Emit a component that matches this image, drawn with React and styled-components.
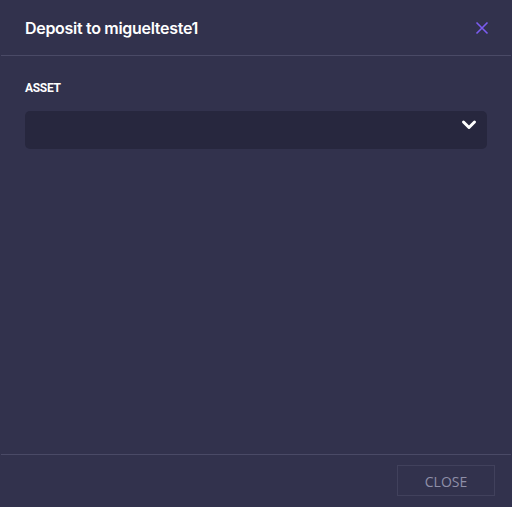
import styled, { createGlobalStyle } from "styled-components";

const GlobalStyle = createGlobalStyle`
  html, body {
    margin: 0;
    padding: 0;
    background: #32324d;
  }
  * {
    box-sizing: border-box;
  }
`

const Modal = styled.div`
  width: 512px;
  height: 507px;
  background: #32324d;
  display: flex;
  flex-direction: column;
  font-family: Inter, "Noto Sans", sans-serif;
  color: #ffffff;
`

const Header = styled.div`
  height: 56px;
  margin: 0 1px;
  padding: 0 22px 0 24px;
  display: flex;
  align-items: center;
  justify-content: space-between;
  border-bottom: 1px solid #4a4a66;
`

const Title = styled.h2`
  margin: 0;
  font-size: 16px;
  font-weight: 600;
  letter-spacing: -0.3px;
`

const CloseIcon = styled.button`
  background: none;
  border: none;
  padding: 0;
  width: 14px;
  height: 14px;
  display: flex;
  cursor: pointer;
`

const Body = styled.div`
  flex: 1;
  padding: 25px 25px 0 25px;
`

const Label = styled.div`
  font-family: Roboto, "Liberation Sans", sans-serif;
  font-size: 12px;
  font-weight: 700;
  letter-spacing: -0.3px;
  margin-bottom: 16px;
`

const Select = styled.div`
  height: 38px;
  width: 462px;
  border-radius: 5px;
  background: #27273e;
  display: flex;
  align-items: flex-start;
  justify-content: flex-end;
  padding: 8px 10px 0 0;
`

const Footer = styled.div`
  height: 53px;
  margin: 0 1px;
  border-top: 1px solid #4a4a66;
  display: flex;
  align-items: flex-start;
  justify-content: flex-end;
  padding: 10px 16px 0 0;
`

const Button = styled.button`
  width: 98px;
  height: 31px;
  background: transparent;
  border: 1px solid #41415c;
  color: #8f8fa8;
  font-family: "Open Sans", sans-serif;
  font-size: 14px;
  text-transform: uppercase;
  cursor: pointer;
  padding-top: 2px;
`

export default function App() {
  return (
    <Modal>
      <GlobalStyle />
      <Header>
        <Title>Deposit to miguelteste1</Title>
        <CloseIcon aria-label="close">
          <svg width="14" height="14" viewBox="0 0 14 14">
            <path d="M1.5 1.5 L12.5 12.5 M12.5 1.5 L1.5 12.5" stroke="#7b5cf0" strokeWidth="1.6" fill="none" />
          </svg>
        </CloseIcon>
      </Header>
      <Body>
        <Label>ASSET</Label>
        <Select>
          <svg width="16" height="11" viewBox="0 0 16 11">
            <path d="M2.5 3 L8 8.5 L13.5 3" stroke="#ffffff" strokeWidth="3" fill="none" strokeLinecap="round" strokeLinejoin="round" />
          </svg>
        </Select>
      </Body>
      <Footer>
        <Button>Close</Button>
      </Footer>
    </Modal>
  )
}
